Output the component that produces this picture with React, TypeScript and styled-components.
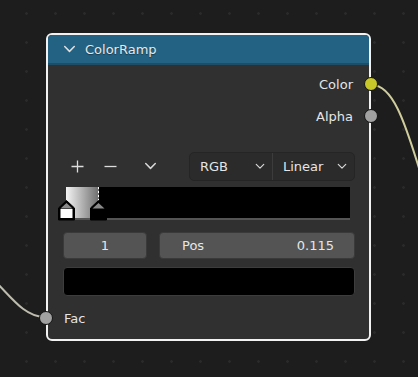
import styled, { createGlobalStyle } from 'styled-components'
import { FC } from 'react'

const GlobalStyle = createGlobalStyle`
  html, body {
    margin: 0;
    padding: 0;
    background: #1d1d1d;
  }
  body {
    font-family: "DejaVu Sans", "Liberation Sans", sans-serif;
  }
`

const Canvas = styled.div`
  position: relative;
  width: 418px;
  height: 377px;
  overflow: hidden;
  background-color: #1d1d1d;
  background-image: radial-gradient(circle, #2a2a2a 1px, transparent 1.6px);
  background-size: 29px 29px;
  background-position: 12px -1px;
`

const Wires = styled.svg`
  position: absolute;
  inset: 0;
  pointer-events: none;
`

const Node = styled.div`
  position: absolute;
  left: 46px;
  top: 33px;
  width: 321px;
  height: 304px;
  border: 2px solid #f2f2f2;
  border-radius: 6px;
  background: #303030;
  display: flex;
  flex-direction: column;
  color: #e5e5e5;
  font-size: 13px;
`

const Header = styled.div`
  height: 28px;
  display: flex;
  align-items: center;
  gap: 9px;
  padding-left: 15px;
  background: #246283;
  border-bottom: 2px solid #1f4d66;
  border-radius: 4px 4px 0 0;
  color: #e8e8e8;
  text-shadow: 0 1px 1px rgba(0, 0, 0, 0.4);
`

const SocketRow = styled.div<{ $side: 'left' | 'right' }>`
  position: relative;
  height: 32px;
  display: flex;
  align-items: center;
  justify-content: ${p => (p.$side === 'right' ? 'flex-end' : 'flex-start')};
  padding: 0 16px;
`

const Socket = styled.span<{ $side: 'left' | 'right'; $color: string }>`
  position: absolute;
  top: 50%;
  ${p => (p.$side === 'right' ? 'right: -9px;' : 'left: -9px;')}
  width: 12px;
  height: 12px;
  margin-top: -7px;
  border-radius: 50%;
  background: ${p => p.$color};
  border: 1px solid #141414;
`

const Outputs = styled.div`
  padding-top: 3px;
`

const Toolbar = styled.div`
  margin-top: 20px;
  height: 29px;
  display: flex;
  align-items: center;
  padding: 0 14px 0 16px;
`

const ToolButton = styled.span<{ $w: number }>`
  width: ${p => p.$w}px;
  display: flex;
  justify-content: center;
  align-items: center;
`

const DropGroup = styled.div`
  margin-left: auto;
  display: flex;
  height: 27px;
  width: 164px;
  border: 1px solid #252525;
  border-radius: 5px;
  background: #2b2b2b;
  overflow: hidden;
`

const Drop = styled.div<{ $w: number }>`
  width: ${p => p.$w}px;
  display: flex;
  align-items: center;
  justify-content: space-between;
  padding: 0 7px 0 10px;
  box-sizing: border-box;
  & + & {
    border-left: 1px solid #3c3c3c;
  }
`

const Ramp = styled.div`
  position: relative;
  margin: 6px 19px 0 18px;
  height: 31px;
  background: linear-gradient(90deg, #f4f4f4 0%, #6e6e6e 11.5%, #000 11.5%, #000 100%);
  border-bottom: 2px solid #545454;
`

const ActiveLine = styled.div`
  position: absolute;
  left: 32px;
  top: 0;
  width: 1px;
  height: 14px;
  background: repeating-linear-gradient(180deg, #fff 0 2px, transparent 2px 4px);
`

const Markers = styled.svg`
  position: absolute;
  left: -8px;
  top: 13px;
  overflow: visible;
`

const FieldRow = styled.div`
  margin: 12px 14px 0 15px;
  display: flex;
  gap: 12px;
`

const Field = styled.div<{ $grow?: boolean }>`
  height: 25px;
  ${p => (p.$grow ? 'flex: 1;' : 'width: 82px;')}
  display: flex;
  align-items: center;
  justify-content: ${p => (p.$grow ? 'space-between' : 'center')};
  padding: 0 ${p => (p.$grow ? '20px 0 22px' : '0')};
  background: #545454;
  border: 1px solid #3a3a3a;
  border-radius: 4px;
  color: #e6e6e6;
`

const Swatch = styled.div`
  margin: 8px 14px 0 15px;
  height: 27px;
  background: #000;
  border: 1px solid #3d3d3d;
  border-radius: 4px;
`

const Inputs = styled.div`
  margin-top: 6px;
`

const Chevron: FC<{ size?: number; color?: string }> = ({ size = 12, color = '#d8d8d8' }) => (
  <svg width={size} height={size / 2 + 2} viewBox="0 0 12 8">
    <path d="M1.5 1.5 L6 6 L10.5 1.5" fill="none" stroke={color} strokeWidth="1.4" strokeLinecap="round" strokeLinejoin="round" />
  </svg>
)

const Marker: FC<{ x: number; fill: string }> = ({ x, fill }) => (
  <g transform={`translate(${x} 0)`}>
    <path d="M0.5 8 L8.5 0.5 L16.5 8 L16.5 20 L0.5 20 Z" fill="#000" stroke="#000" strokeWidth="1" strokeLinejoin="round" />
    <path d="M2.5 8.5 L8.5 3 L14.5 8.5 Z" fill="#8a8a8a" />
    <rect x="2.5" y="9" width="12" height="9" fill={fill} />
  </g>
)

const App: FC = () => {
  return (
    <Canvas>
      <GlobalStyle />
      <Wires width="418" height="377">
        <path d="M372 85 C 392 85, 404 118, 422 178" fill="none" stroke="#cfcd9c" strokeWidth="2" />
        <path d="M-6 280 C 12 298, 24 316, 44 317" fill="none" stroke="#bdbcae" strokeWidth="2" />
      </Wires>
      <Node>
        <Header>
          <Chevron size={13} color="#e0e0e0" />
          <span>ColorRamp</span>
        </Header>
        <Outputs>
          <SocketRow $side="right">
            Color
            <Socket $side="right" $color="#c7c729" />
          </SocketRow>
          <SocketRow $side="right">
            Alpha
            <Socket $side="right" $color="#a1a1a1" />
          </SocketRow>
        </Outputs>
        <Toolbar>
          <ToolButton $w={26}>
            <svg width="13" height="13" viewBox="0 0 13 13">
              <path d="M6.5 0.5 V12.5 M0.5 6.5 H12.5" stroke="#dcdcdc" strokeWidth="1.3" />
            </svg>
          </ToolButton>
          <ToolButton $w={40}>
            <svg width="13" height="13" viewBox="0 0 13 13">
              <path d="M0.5 6.5 H12.5" stroke="#dcdcdc" strokeWidth="1.3" />
            </svg>
          </ToolButton>
          <ToolButton $w={40}>
            <Chevron size={13} />
          </ToolButton>
          <DropGroup>
            <Drop $w={82}>
              <span>RGB</span>
              <Chevron size={10} />
            </Drop>
            <Drop $w={82}>
              <span>Linear</span>
              <Chevron size={10} />
            </Drop>
          </DropGroup>
        </Toolbar>
        <Ramp>
          <ActiveLine />
          <Markers width="60" height="22">
            <Marker x={0} fill="#ffffff" />
            <Marker x={32} fill="#000000" />
          </Markers>
        </Ramp>
        <FieldRow>
          <Field>1</Field>
          <Field $grow>
            <span>Pos</span>
            <span>0.115</span>
          </Field>
        </FieldRow>
        <Swatch />
        <Inputs>
          <SocketRow $side="left">
            Fac
            <Socket $side="left" $color="#a1a1a1" />
          </SocketRow>
        </Inputs>
      </Node>
    </Canvas>
  )
}

export default App
